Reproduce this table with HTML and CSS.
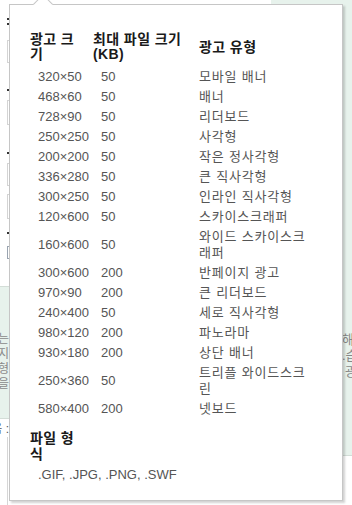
FILE: index.html
```html
<!DOCTYPE html>
<html lang="ko">
<head>
<meta charset="utf-8">
<title>광고 크기</title>
<link rel="stylesheet" href="styles.css">
</head>
<body>
<div class="page">
  <div class="bg">
    <div class="bg-left">
      <div class="dots d1"></div>
      <div class="box b1"></div>
      <div class="dot d2"></div>
      <div class="box b2"></div>
      <div class="dot d3"></div>
      <div class="box b3"></div>
      <div class="box b4"></div>
      <div class="dot d4"></div>
      <div class="box b5"></div>
      <div class="green-left">
        <div class="gl-line">는</div>
        <div class="gl-line">지</div>
        <div class="gl-line">형</div>
        <div class="gl-line"><span class="blue">●</span>을</div>
      </div>
      <div class="after-green">음 :</div>
      <div class="vline"></div>
    </div>
    <div class="bg-mid"></div>
    <div class="bg-right">
      <div class="right-text">
        <div>해</div>
        <div>.습</div>
        <div class="indent">광</div>
      </div>
    </div>
  </div>

  <div class="popup">
    <table class="sizes">
      <colgroup>
        <col class="c1">
        <col class="c2">
        <col class="c3">
      </colgroup>
      <thead>
        <tr>
          <th class="h1">광고 크기</th>
          <th class="h2">최대 파일 크기 (KB)</th>
          <th class="h3">광고 유형</th>
        </tr>
      </thead>
      <tbody>
        <tr><td>320×50</td><td>50</td><td class="type">모바일 배너</td></tr>
        <tr><td>468×60</td><td>50</td><td class="type">배너</td></tr>
        <tr><td>728×90</td><td>50</td><td class="type">리더보드</td></tr>
        <tr><td>250×250</td><td>50</td><td class="type">사각형</td></tr>
        <tr><td>200×200</td><td>50</td><td class="type">작은 정사각형</td></tr>
        <tr><td>336×280</td><td>50</td><td class="type">큰 직사각형</td></tr>
        <tr><td>300×250</td><td>50</td><td class="type">인라인 직사각형</td></tr>
        <tr><td>120×600</td><td>50</td><td class="type">스카이스크래퍼</td></tr>
        <tr><td>160×600</td><td>50</td><td class="type">와이드 스카이스크래퍼</td></tr>
        <tr><td>300×600</td><td>200</td><td class="type">반페이지 광고</td></tr>
        <tr><td>970×90</td><td>200</td><td class="type">큰 리더보드</td></tr>
        <tr><td>240×400</td><td>50</td><td class="type">세로 직사각형</td></tr>
        <tr><td>980×120</td><td>200</td><td class="type">파노라마</td></tr>
        <tr><td>930×180</td><td>200</td><td class="type">상단 배너</td></tr>
        <tr><td>250×360</td><td>50</td><td class="type">트리플 와이드스크린</td></tr>
        <tr><td>580×400</td><td>200</td><td class="type">넷보드</td></tr>
      </tbody>
    </table>
    <div class="formats">
      <div class="fmt-title">파일 형식</div>
      <div class="fmt-list">.GIF, .JPG, .PNG, .SWF</div>
    </div>
  </div>
</div>
</body>
</html>
```

FILE: styles.css
```css
* {
  box-sizing: border-box;
}

html, body {
  margin: 0;
  padding: 0;
  background: #ffffff;
}

.page {
  position: relative;
  width: 352px;
  height: 505px;
  overflow: hidden;
  background: #ffffff;
  font-family: "Liberation Sans", "Noto Sans CJK KR", Arial, sans-serif;
}

/* ---------- background page (mostly hidden) ---------- */
.bg {
  display: flex;
  height: 505px;
}

.bg-left {
  width: 40px;
  flex: none;
  display: flex;
  flex-direction: column;
}

.dots {
  width: 2px;
  height: 7px;
  margin-left: 7px;
  border-top: 2px solid #333;
  border-bottom: 2px solid #333;
}
.d1 { margin-top: 18px; }

.dot {
  width: 2px;
  height: 2px;
  margin-left: 7px;
  background: #333;
}

.box {
  width: 20px;
  margin-left: 7px;
  border: 1px solid #d4d4d4;
  background: #fff;
}
.b1 { margin-top: 15px; height: 24px; }
.d2 { margin-top: 26px; }
.b2 { margin-top: 9px; height: 25px; }
.d3 { margin-top: 27px; }
.b3 { margin-top: 9px; height: 24px; }
.b4 { margin-top: 8px; height: 25px; }
.d4 { margin-top: 13px; }
.b5 { margin-top: 12px; height: 14px; border-color: #9aa4b0; }

.green-left {
  margin-top: 27px;
  height: 135px;
  background: #e7f2ec;
  border-top: 1px solid #d3ddd7;
  border-bottom: 1px solid #d3ddd7;
  padding-top: 45px;
  width: 9px;
  overflow: hidden;
}

.gl-line {
  display: flex;
  justify-content: flex-end;
  white-space: nowrap;
  font-size: 12px;
  line-height: 15px;
  color: #8a8a8a;
}

.blue {
  color: #6f9fd6;
  font-size: 9px;
}

.after-green {
  margin-top: 3px;
  width: 9px;
  display: flex;
  justify-content: flex-end;
  white-space: nowrap;
  overflow: hidden;
  font-size: 12px;
  line-height: 15px;
  color: #555;
}

.vline {
  margin-left: 7px;
  width: 1px;
  height: 70px;
  background: #d6d6d6;
}

.bg-mid {
  flex: 1;
}

.bg-right {
  width: 81px;
  flex: none;
  height: 456px;
  background: #e7f2ec;
  border-bottom: 1px solid #d3ddd7;
  padding-top: 332px;
}

.right-text {
  margin-left: 71px;
  font-size: 13px;
  line-height: 16px;
  color: #888;
  white-space: nowrap;
}

.right-text .indent {
  padding-left: 3px;
}

/* ---------- popup ---------- */
.popup {
  position: absolute;
  left: 9px;
  top: 4px;
  width: 334px;
  height: 497px;
  background: #ffffff;
  border: 1px solid #c6c6c6;
  box-shadow: 2px 2px 2px rgba(0, 0, 0, 0.18);
  padding: 27px 20px 0 20px;
}

.popup::before {
  content: "";
  position: absolute;
  left: 26px;
  top: -8px;
  width: 13px;
  height: 13px;
  background: #ffffff;
  border-top: 1px solid #c6c6c6;
  border-left: 1px solid #c6c6c6;
  transform: rotate(45deg);
}

.sizes {
  width: 284px;
  table-layout: fixed;
  border-collapse: collapse;
  border-spacing: 0;
}

.c1 { width: 63px; }
.c2 { width: 106px; }
.c3 { width: 115px; }

.sizes th {
  font-family: "Liberation Sans", "Noto Sans CJK KR", Arial, sans-serif;
  font-size: 14px;
  font-weight: 700;
  letter-spacing: 0.4px;
  line-height: 15px;
  color: #1a1a1a;
  text-align: left;
  vertical-align: middle;
  padding: 0 12px 5px 0;
}

.sizes th.h3 {
  padding-right: 0;
}

.sizes td {
  font-size: 13px;
  line-height: 16px;
  color: #555555;
  vertical-align: middle;
  padding: 2px 0 2px 8px;
}

.sizes td.type {
  padding-left: 0;
  letter-spacing: 0.8px;
}

.formats {
  margin-top: 11px;
}

.fmt-title {
  width: 51px;
  font-size: 14px;
  font-weight: 700;
  letter-spacing: 0.4px;
  line-height: 16px;
  color: #1a1a1a;
}

.fmt-list {
  margin-top: 5px;
  padding-left: 8px;
  font-size: 13px;
  line-height: 16px;
  color: #555555;
}
```
